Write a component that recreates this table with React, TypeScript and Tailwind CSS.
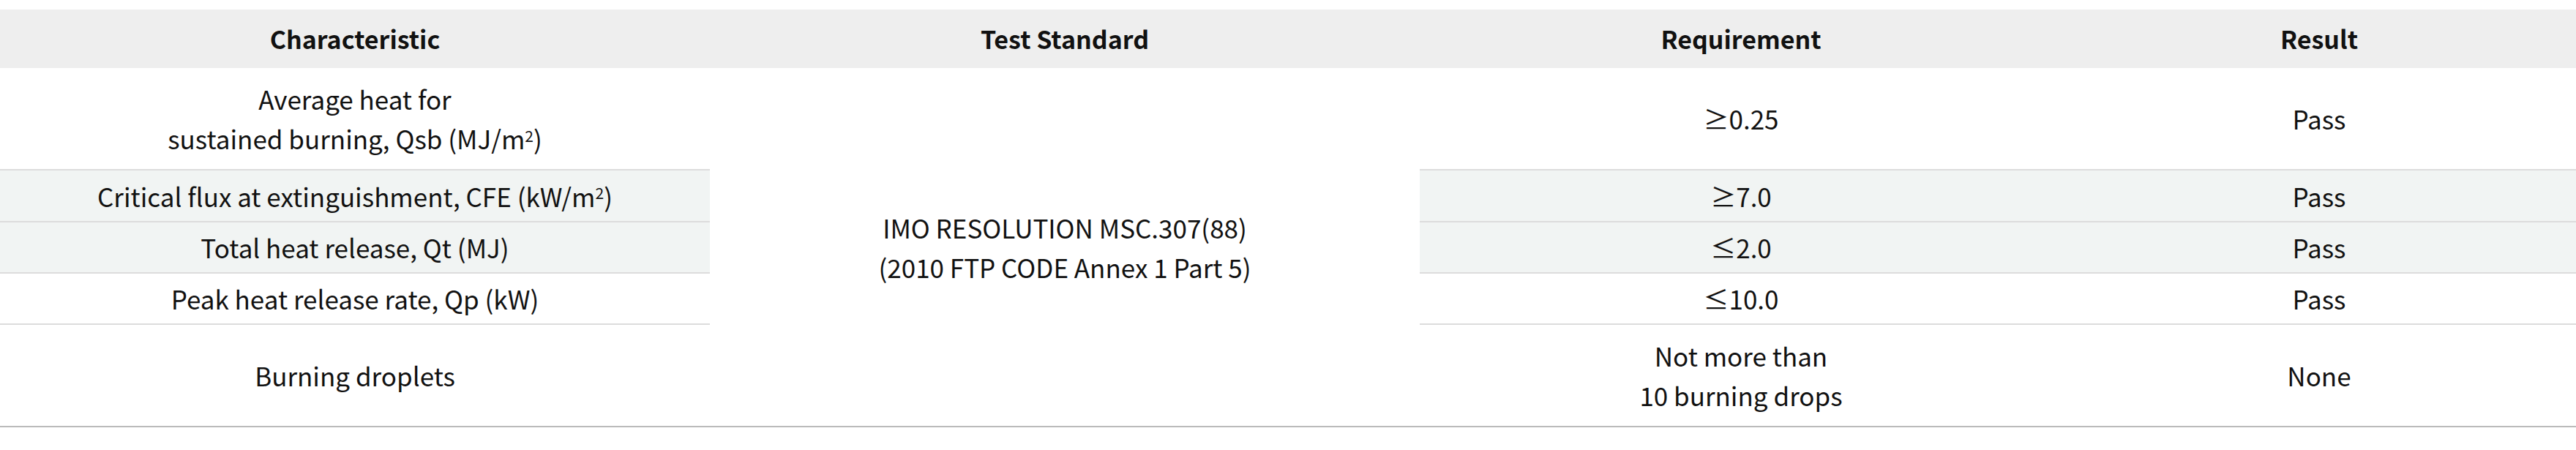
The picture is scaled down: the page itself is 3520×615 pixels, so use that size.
import React from "react";

const font = { fontFamily: '"Noto Sans CJK KR", "Noto Sans", sans-serif' };

type Row = {
  name: React.ReactNode;
  req: React.ReactNode;
  result: string;
  h: string;
  bg: string;
  last?: boolean;
};

const rows: Row[] = [
  {
    name: (
      <>
        Average heat for
        <br />
        sustained burning, Qsb (MJ/m<sup className="text-[0.6em]">2</sup>)
      </>
    ),
    req: "≥0.25",
    result: "Pass",
    h: "h-[139px]",
    bg: "bg-white",
  },
  {
    name: (
      <>
        Critical flux at extinguishment, CFE (kW/m<sup className="text-[0.6em]">2</sup>)
      </>
    ),
    req: "≥7.0",
    result: "Pass",
    h: "h-[71px]",
    bg: "bg-[#f1f4f3]",
  },
  {
    name: "Total heat release, Qt (MJ)",
    req: "≤2.0",
    result: "Pass",
    h: "h-[70px]",
    bg: "bg-[#f1f4f3]",
  },
  {
    name: "Peak heat release rate, Qp (kW)",
    req: "≤10.0",
    result: "Pass",
    h: "h-[70px]",
    bg: "bg-white",
  },
  {
    name: "Burning droplets",
    req: (
      <>
        Not more than
        <br />
        10 burning drops
      </>
    ),
    result: "None",
    h: "h-[140px]",
    bg: "bg-white",
    last: true,
  },
];

export default function App() {
  return (
    <div className="bg-white pt-[13px] w-[3520px]" style={font}>
      <table className="w-full table-fixed border-collapse text-[35px] leading-[54px] text-[#111]">
        <colgroup>
          <col className="w-[970px]" />
          <col className="w-[970px]" />
          <col className="w-[878px]" />
          <col className="w-[702px]" />
        </colgroup>
        <thead>
          <tr className="h-[80px] bg-[#eeeeee] text-[34px]">
            <th className="font-bold text-center align-middle">Characteristic</th>
            <th className="font-bold text-center align-middle">Test Standard</th>
            <th className="font-bold text-center align-middle">Requirement</th>
            <th className="font-bold text-center align-middle">Result</th>
          </tr>
        </thead>
        <tbody>
          {rows.map((r, i) => {
            const line = r.last
              ? "border-b-2 border-[#bbbbbb]"
              : "border-b-2 border-[#dcdcdc]";
            return (
              <tr key={i} className={r.h}>
                <td className={`${r.bg} ${line} text-center align-middle`}>{r.name}</td>
                {i === 0 && (
                  <td
                    rowSpan={5}
                    className="bg-white border-b-2 border-[#bbbbbb] text-center align-middle"
                  >
                    IMO RESOLUTION MSC.307(88)
                    <br />
                    (2010 FTP CODE Annex 1 Part 5)
                  </td>
                )}
                <td className={`${r.bg} ${line} text-center align-middle`}>{r.req}</td>
                <td className={`${r.bg} ${line} text-center align-middle`}>{r.result}</td>
              </tr>
            );
          })}
        </tbody>
      </table>
    </div>
  );
}
